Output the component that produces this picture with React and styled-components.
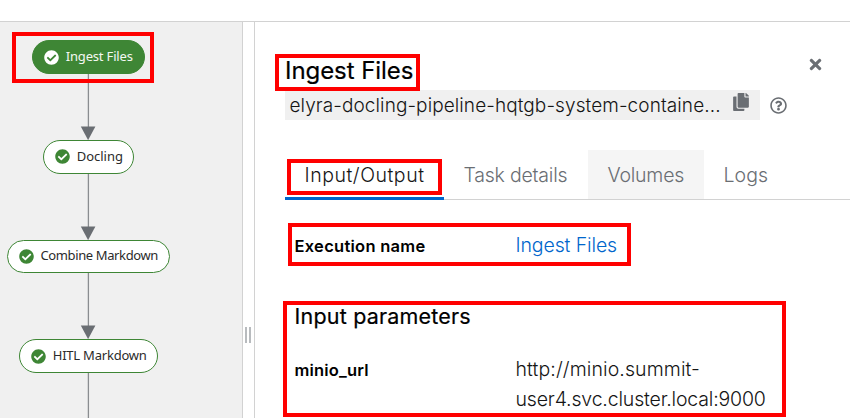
import React from 'react';
import styled, { createGlobalStyle } from 'styled-components';
import { FaCheckCircle, FaCopy, FaRegQuestionCircle, FaTimes } from 'react-icons/fa';

const GlobalStyle = createGlobalStyle`
  * { box-sizing: border-box; }
  body { margin: 0; background: #fff; color: #151515; font-family: Inter, "Noto Sans", sans-serif; }
  h1, h2, p, dl, dt, dd { margin: 0; }
`;

const Page = styled.div`
  position: relative;
  display: flex;
  flex-direction: column;
  width: 850px;
  height: 418px;
  overflow: hidden;
`;

const TopBar = styled.header`
  flex: none;
  height: 22px;
  border-bottom: 1px solid #d2d2d2;
`;

const Workspace = styled.main`
  display: flex;
  flex: 1;
  min-height: 0;
`;

const Graph = styled.section`
  display: flex;
  flex-direction: column;
  align-items: center;
  width: 242px;
  padding: 18.45px 65.5px 0 0;
  overflow: hidden;
  background: #f0f0f0;
`;

const Node = styled.div`
  display: flex;
  flex: none;
  align-items: center;
  gap: 7px;
  width: ${(p) => p.$width}px;
  height: 33.5px;
  padding-left: 11px;
  border: 1px solid #3e8635;
  border-radius: 17px;
  background: ${(p) => (p.$selected ? '#3e8635' : '#fff')};
  color: ${(p) => (p.$selected ? '#f4f8f3' : '#2b2b2b')};
  font: 400 13px/18px "Noto Sans", sans-serif;
  letter-spacing: ${(p) => p.$spacing}px;
  white-space: nowrap;

  svg {
    flex: none;
    width: 15px;
    height: 15px;
    color: ${(p) => (p.$selected ? '#fff' : '#3e8635')};
  }
`;

const NodeLabel = styled.span`
  padding-bottom: 2px;
`;

const Edge = styled.svg`
  flex: none;
  display: block;
  width: 16px;
  height: 66.15px;
`;

const Splitter = styled.div`
  display: flex;
  justify-content: center;
  gap: 2px;
  width: 13px;
  padding: 305px 2px 0 0;
  border: solid #d2d2d2;
  border-width: 0 1px;
`;

const Grip = styled.span`
  width: 2px;
  height: 16px;
  background: #b8bbbe;
`;

const Details = styled.section`
  flex: 1;
  min-width: 0;
  padding: 32px 0 0 30px;
`;

const Heading = styled.div`
  display: flex;
  justify-content: space-between;
  height: 36px;
  padding-right: 28px;
`;

const Title = styled.h1`
  font-size: 24px;
  font-weight: 400;
  line-height: 34px;
  letter-spacing: ${(p) => p.$spacing}px;
  -webkit-text-stroke: 0.2px;
  color: #000;
`;

const CloseButton = styled.button`
  display: flex;
  width: 13px;
  height: 17px;
  margin-top: 2px;
  padding: 0;
  border: 0;
  background: none;
  color: #6a6e73;

  svg { width: 13px; height: 17px; }
`;

const PodRow = styled.div`
  display: flex;
  align-items: center;
  gap: 10px;
  height: 30px;
  color: #6a6e73;
`;

const PodName = styled.div`
  display: flex;
  justify-content: space-between;
  width: 475px;
  height: 30px;
  padding: 0 11px 0 4.5px;
  background: #f0f0f0;
  color: #151515;
  font-size: 19px;
  font-weight: 300;
  line-height: 32px;
  letter-spacing: ${(p) => p.$spacing}px;

  svg { width: 16px; height: 18px; margin-top: 3px; color: #6a6e73; }
`;

const Tabs = styled.nav`
  display: flex;
  height: 50px;
  margin-top: 30px;
  border-bottom: 1px solid #d2d2d2;
`;

const Tab = styled.a`
  flex: none;
  width: ${(p) => p.$width}px;
  height: ${(p) => (p.$active ? 50 : 49)}px;
  padding-left: 19.5px;
  border-bottom: ${(p) => (p.$active ? '3px solid #06c' : '0')};
  background: ${(p) => (p.$hovered ? '#f5f5f5' : 'transparent')};
  color: ${(p) => (p.$active ? '#151515' : '#6a6e73')};
  font-size: 19.5px;
  font-weight: 300;
  line-height: 50px;
  letter-spacing: ${(p) => p.$spacing}px;
`;

const Fields = styled.dl`
  display: grid;
  grid-template-columns: 221px 270px;
  margin-top: ${(p) => p.$top}px;
  padding-left: 9.5px;
`;

const Term = styled.dt`
  color: #000;
  font-size: 16.5px;
  font-weight: 600;
  line-height: 32px;
  letter-spacing: ${(p) => p.$spacing}px;
`;

const Value = styled.dd`
  color: ${(p) => (p.$link ? '#06c' : '#151515')};
  font-size: 19.5px;
  font-weight: 300;
  line-height: 30px;
`;

const Line = styled.span`
  display: block;
  letter-spacing: ${(p) => p.$spacing}px;
`;

const SectionTitle = styled.h2`
  margin-top: 39px;
  padding-left: 9.5px;
  color: #000;
  font-size: 21.5px;
  font-weight: 400;
  line-height: 30px;
  letter-spacing: ${(p) => p.$spacing}px;
  -webkit-text-stroke: 0.2px;
`;

const Highlight = styled.div`
  position: absolute;
  left: ${(p) => p.$x}px;
  top: ${(p) => p.$y}px;
  width: ${(p) => p.$w}px;
  height: ${(p) => p.$h}px;
  border: 4px solid #f00;
  pointer-events: none;
`;

const steps = [
  { name: 'Ingest Files', width: 113, spacing: -0.18, selected: true },
  { name: 'Docling', width: 91, spacing: -0.03 },
  { name: 'Combine Markdown', width: 163.5, spacing: -0.38 },
  { name: 'HITL Markdown', width: 139, spacing: -0.22 },
];

const tabs = [
  { label: 'Input/Output', width: 159, spacing: 0.54, active: true },
  { label: 'Task details', width: 144, spacing: -0.21 },
  { label: 'Volumes', width: 116, spacing: -0.22, hovered: true },
  { label: 'Logs', width: 80, spacing: 0.1 },
];

const highlights = [
  [12, 32, 142, 51],
  [275, 54, 145, 37],
  [287, 159, 155, 36],
  [288, 223, 343, 43],
  [283, 301, 503, 116],
];

export default function App() {
  return (
    <>
      <GlobalStyle />
      <Page>
        <TopBar />
        <Workspace>
          <Graph>
            {steps.map((step) => (
              <React.Fragment key={step.name}>
                <Node $width={step.width} $selected={step.selected} $spacing={step.spacing}>
                  <FaCheckCircle />
                  <NodeLabel>{step.name}</NodeLabel>
                </Node>
                <Edge viewBox="0 0 16 66.15">
                  <path d="M8.4 0V54" stroke="#8a8d90" strokeWidth="1.3" />
                  <path d="M.8 52.4h14.6L8.1 66.15z" fill="#6a6e73" />
                </Edge>
              </React.Fragment>
            ))}
          </Graph>
          <Splitter>
            <Grip />
            <Grip />
          </Splitter>
          <Details>
            <Heading>
              <Title $spacing={-0.06}>Ingest Files</Title>
              <CloseButton aria-label="Close"><FaTimes /></CloseButton>
            </Heading>
            <PodRow>
              <PodName $spacing={0.09}>
                elyra-docling-pipeline-hqtgb-system-containe...
                <FaCopy />
              </PodName>
              <FaRegQuestionCircle size={17} />
            </PodRow>
            <Tabs>
              {tabs.map((tab) => (
                <Tab key={tab.label} $width={tab.width} $spacing={tab.spacing} $active={tab.active} $hovered={tab.hovered}>
                  {tab.label}
                </Tab>
              ))}
            </Tabs>
            <Fields $top={30}>
              <Term $spacing={0.28}>Execution name</Term>
              <Value $link><Line $spacing={-0.12}>Ingest Files</Line></Value>
            </Fields>
            <SectionTitle $spacing={0.2}>Input parameters</SectionTitle>
            <Fields $top={23}>
              <Term $spacing={0.18}>minio_url</Term>
              <Value>
                <Line $spacing={0.1}>http://minio.summit-</Line>
                <Line $spacing={-0.17}>user4.svc.cluster.local:9000</Line>
              </Value>
            </Fields>
          </Details>
        </Workspace>
        {highlights.map(([x, y, w, h]) => (
          <Highlight key={`${x}-${y}`} $x={x} $y={y} $w={w} $h={h} />
        ))}
      </Page>
    </>
  );
}
